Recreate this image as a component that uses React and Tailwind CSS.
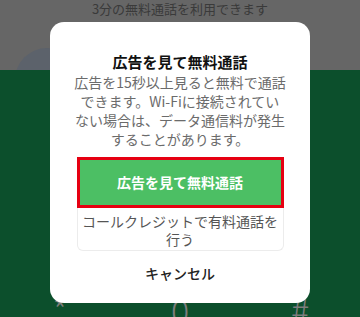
import React from 'react';

const jp = { fontFamily: '"Noto Sans CJK JP", "Noto Sans", sans-serif' };

const AdCallDialog = () => {
  return (
    <div className="absolute left-[50px] top-[22px] w-[260px] h-[281px] bg-white rounded-[14px] flex flex-col items-center pt-[29px]">
      <h2 className="text-[15px] leading-[22px] font-bold text-[#111]">広告を見て無料通話</h2>
      <p className="whitespace-nowrap text-center text-[14px] leading-[19px] text-[#6b6b6b]">
        広告を15秒以上見ると無料で通話
        <br />
        できます。Wi-Fiに接続されてい
        <br />
        ない場合は、データ通信料が発生
        <br />
        することがあります。
      </p>
      <div className="mt-[8px] w-[207px] border-[3px] border-[#e60012]">
        <button className="w-full h-[45px] bg-[#4cbf64] text-white text-[14px] font-bold">
          広告を見て無料通話
        </button>
      </div>
      <button className="w-[207px] h-[43px] border border-[#ececec] border-t-0 rounded-b-[6px] text-[14px] leading-[18px] text-[#555] pt-[2px]">
        コールクレジットで有料通話を
        <br />
        行う
      </button>
      <button className="mt-[12px] text-[14px] leading-[20px] font-medium text-[#222]">キャンセル</button>
    </div>
  );
};

export default function App() {
  return (
    <div className="relative w-[360px] h-[317px] overflow-hidden" style={jp}>
      <div className="relative h-[70px] bg-[#666666] overflow-hidden">
        <p className="text-center text-[13px] leading-[18px] text-[#3a3a3a]">3分の無料通話を利用できます</p>
        <div className="absolute left-[15px] top-[48px] w-[64px] h-[64px] rounded-full bg-[#5c626b]"></div>
      </div>
      <div className="h-[247px] bg-[#0c4f2c] flex flex-col justify-end">
        <div className="grid grid-cols-3 text-center text-[34px] leading-none font-light text-[#7d7d7d] translate-y-[10px]">
          <span>*</span>
          <span>0</span>
          <span>#</span>
        </div>
      </div>
      <AdCallDialog />
    </div>
  );
}
